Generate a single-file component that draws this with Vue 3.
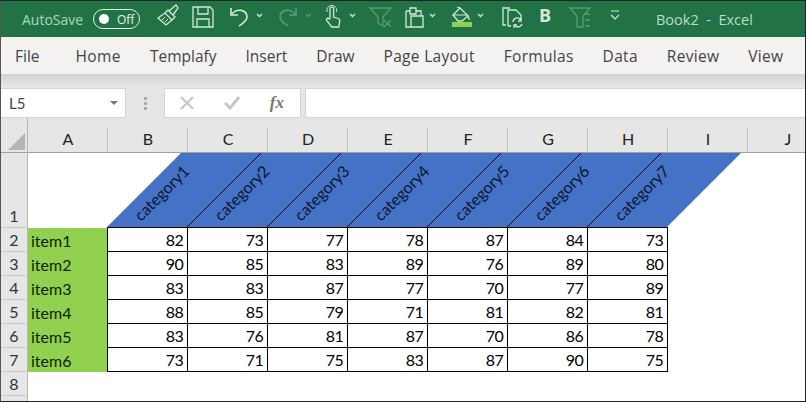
<script setup>
const tabs = ['File','Home','Templafy','Insert','Draw','Page Layout','Formulas','Data','Review','View']
const cols = ['A','B','C','D','E','F','G','H','I','J']
const cats = [1,2,3,4,5,6,7]
const rows = [
  ['item1',82,73,77,78,87,84,73],
  ['item2',90,85,83,89,76,89,80],
  ['item3',83,83,87,77,70,77,89],
  ['item4',88,85,79,71,81,82,81],
  ['item5',83,76,81,87,70,86,78],
  ['item6',73,71,75,83,87,90,75],
]
</script>

<template>
  <div class="app">
    <header class="title">
      <span class="autosave">AutoSave</span>
      <span class="toggle"><i class="knob"></i><b>Off</b></span>
      <svg class="qat" width="490" height="36" viewBox="0 0 490 36" fill="none" stroke="#d3e8db" stroke-width="1.300">
        <!-- brush -->
        <path d="M3 17 L10 12 L17 19 L11 24 Z M10 12 L13 9 L20 16 L17 19 M14 10 L21 4 L23 7 L18 14"/>
        <path d="M7 19 L10 16 M10 21 L13 18" stroke-width="1"/>
        <!-- save -->
        <path d="M38 6 h17 l3 3 v17 h-20 z M43 6 v7 h10 v-7 M42 26 v-8 h12 v8"/>
        <!-- undo -->
        <path d="M76 7 v7 h7 M76 14 c6 -8 16 -5 16 2 c0 4 -5 7 -8 9" stroke-width="1.600"/>
        <path d="M102 13 l2.500 2.500 l2.500 -2.500"/>
        <!-- redo, disabled -->
        <g stroke="#5a9a75">
          <path d="M141 7 v7 h-7 M141 14 c-6 -8 -16 -5 -16 2 c0 4 5 7 8 9" stroke-width="1.600"/>
          <path d="M151 13 l2.500 2.500 l2.500 -2.500"/>
        </g>
        <!-- touch -->
        <path d="M175 17 v-9 a1.800 1.800 0 0 1 3.600 0 v8 l4.500 1.500 c1.500 .5 1.800 1.500 1.600 3 l-1 5.500 h-7 l-5 -6.500 c-1 -2 1 -3 3 -1.500 z"/>
        <path d="M172 11 a5 5 0 1 1 9.500 0" stroke-width="1"/>
        <path d="M195 13 l2.500 2.500 l2.500 -2.500"/>
        <!-- clear filter, disabled -->
        <g stroke="#5a9a75">
          <path d="M215 7 h21 l-8 9 v9 l-5 -3 v-6 z M229 19 l7 7 M236 19 l-7 7"/>
        </g>
        <!-- paste -->
        <path d="M251 10 h4 v-3 h6 v3 h5 v5 M255 10 v3 h6 v-3 M251 10 v16 h5 M256 15 h12 v11 h-12 z"/>
        <path d="M275 13 l2.500 2.500 l2.500 -2.500"/>
        <!-- fill colour -->
        <path d="M298 14 l7 -7 l8 8 l-6 5 h-4 z M305 7 l-3 -1 M313 15 l1.500 4"/>
        <path d="M298 14 h15" stroke-width="1"/>
        <rect x="297" y="21" width="20" height="5" fill="#92d050" stroke="none"/>
        <path d="M323 13 l2.500 2.500 l2.500 -2.500"/>
        <!-- document with refresh -->
        <path d="M351 24 h-3 v-17 h7 M353 25 v-16 h8 l5 5 v4 M353 25 h3"/>
        <path d="M358 21 a4 4 0 0 1 7.500 -2 M366 17 v3 h-3 M367 23 a4 4 0 0 1 -7 1.500 M359 27 v-3 h3"/>
        <!-- bold -->
        <text x="384" y="21" class="bold">B</text>
        <!-- funnel, disabled -->
        <g stroke="#5a9a75">
          <path d="M415 7 h20 l-7 8 v11 h-6 v-11 z M429 13 h6 M430 19 h5 M430 25 h5"/>
        </g>
        <!-- customise -->
        <path d="M456 10 h8 M456 14 l4 4 l4 -4" stroke-width="1.200"/>
      </svg>
      <span class="book">Book2&nbsp; -&nbsp; Excel</span>
    </header>

    <nav class="tabs">
      <span v-for="t in tabs" :key="t" class="tab">{{ t }}</span>
    </nav>

    <section class="fbar">
      <div class="namebox"><span>L5</span><i class="caret"></i></div>
      <div class="dots"><i></i><i></i><i></i></div>
      <div class="buttons">
        <svg width="16" height="14" viewBox="0 0 16 14" fill="none" stroke="#c6c6c6" stroke-width="2"><path d="M2 1 l12 12 M14 1 l-12 12"/></svg>
        <svg width="18" height="14" viewBox="0 0 18 14" fill="none" stroke="#c6c6c6" stroke-width="3"><path d="M2 7 l5 5 l9 -11"/></svg>
        <em>fx</em>
      </div>
      <div class="input"></div>
    </section>

    <main class="sheet">
      <div class="corner"><i></i></div>
      <div v-for="c in cols" :key="c" class="colh">{{ c }}</div>

      <div class="rowh tall">1</div>
      <div class="head">
        <svg width="720" height="75" viewBox="0 0 720 75">
          <path d="M79 74 L153 0 H713 L639 74 Z" fill="#4472c4"/>
          <path v-for="n in 6" :key="n" :d="`M${79 + n * 80} 74 L${153 + n * 80} 0`" stroke="#000" stroke-width="1" fill="none"/>
          <path d="M79 74.500 H640" stroke="#000" stroke-width="1"/>
          <text v-for="n in cats" :key="n" :transform="`translate(${n * 80 + 33} 69) rotate(-45)`" class="cat">category{{ n }}</text>
        </svg>
      </div>

      <template v-for="(r, i) in rows" :key="i">
        <div class="rowh">{{ i + 2 }}</div>
        <div class="item">{{ r[0] }}</div>
        <div v-for="(v, j) in r.slice(1)" :key="j" class="num">{{ v }}</div>
        <div class="blank"></div>
      </template>

      <div class="rowh">8</div>
      <div class="rest"></div>
      <div class="rowh stub"></div>
      <div class="rest"></div>
    </main>
  </div>
</template>

<style scoped>
.app { width: 806px; height: 402px; box-sizing: border-box; border: 1px solid #222; border-left-color: #555; overflow: hidden; background: #fff; display: flex; flex-direction: column; font-family: "Open Sans", sans-serif; }
.title { height: 36px; flex: none; background: #217346; color: #cfe6d8; display: flex; align-items: center; font-size: 14px; }
.autosave { margin-left: 21px; width: 71px; color: #a9d6bb; }
.toggle { width: 47px; height: 20px; box-sizing: border-box; border: 1.500px solid #e6f2ea; border-radius: 10px; display: flex; align-items: center; color: #e6f2ea; font-size: 12px; }
.toggle b { font-weight: 400; margin-left: 8px; }
.knob { width: 10px; height: 10px; border-radius: 50%; background: #fff; margin-left: 5px; }
.qat { margin-left: 15px; flex: none; }
.bold { font: 700 18px "Open Sans", sans-serif; fill: #d3e8db; stroke: none; }
.book { margin-left: 11px; font-size: 14.500px; color: #b9dcc7; white-space: nowrap; }
.tabs { height: 37px; flex: none; background: #f3f2f1; display: flex; align-items: center; padding-left: 14px; color: #444; font-size: 15.500px; box-sizing: border-box; gap: 29px; }
.tab:first-child { margin-right: 7px; }
.tab:nth-child(2) { letter-spacing: .4px; }
.tab:nth-child(n+6) { letter-spacing: .3px; }
.fbar { height: 44px; flex: none; background: linear-gradient(#d2d2d2 0, #e6e6e6 12px, #e6e6e6); display: flex; align-items: flex-end; box-sizing: border-box; }
.namebox { width: 126px; height: 30px; margin-left: -1px; padding-left: 8px; box-sizing: border-box; background: #fff; border: 1px solid #d4d4d4; display: flex; align-items: center; justify-content: space-between; font: 15px Lato, sans-serif; color: #444; }
.caret { width: 0; height: 0; margin-right: 7px; border: 4px solid transparent; border-top-color: #777; border-bottom: 0; }
.dots { width: 38px; height: 30px; display: flex; flex-direction: column; align-items: center; justify-content: center; gap: 2px; }
.dots i { width: 3px; height: 3px; background: #aaa; }
.buttons { width: 137px; height: 30px; box-sizing: border-box; background: #fff; border: 1px solid #d4d4d4; display: flex; align-items: center; justify-content: space-between; padding: 0 16px 0 14px; }
.buttons em { font: italic 700 17px "Liberation Serif", serif; color: #777; }
.input { flex: 1; height: 30px; margin-left: 4px; margin-right: -1px; box-sizing: border-box; background: #fff; border: 1px solid #d4d4d4; }
.sheet { flex: 1; display: grid; grid-template-columns: 27px repeat(10, 80px); grid-template-rows: 35px 75px repeat(7, 24px) 1fr; font-family: Lato, sans-serif; background: #fff; color: #000; min-height: 0; }
.corner { background: #e6e6e6; border-right: 1px solid #b5b5b5; border-bottom: 1px solid #a0a0a0; position: relative; }
.corner i { position: absolute; right: 2px; bottom: 2px; border-style: solid; border-width: 0 0 17px 17px; border-color: transparent transparent #b4b4b4 transparent; }
.colh { background: linear-gradient(#c4c4c4, #c4c4c4) right bottom / 1px 25px no-repeat #e6e6e6; display: flex; align-items: flex-end; justify-content: center; font-size: 16px; line-height: 24px; padding-bottom: 1px; color: #222; border-bottom: 1px solid #a0a0a0; }
.rowh { background: #e6e6e6; display: flex; align-items: center; justify-content: center; font-size: 16px; color: #333; border-right: 1px solid #b5b5b5; border-bottom: 1px solid #c8c8c8; grid-column: 1; }
.tall { align-items: flex-end; line-height: 22px; }
.head { grid-column: 2 / -1; min-width: 0; }
.head svg { display: block; }
.cat { font: 16px Lato, sans-serif; fill: #0a1530; }
.item { background: #92d050; font-size: 16px; display: flex; align-items: center; padding-left: 3px; color: #0c2400; border-right: 1px solid #000; }
.num { display: flex; align-items: center; justify-content: flex-end; padding-right: 4px; font-size: 16px; letter-spacing: -0.700px; border-right: 1px solid #000; border-bottom: 1px solid #000; }
.blank { grid-column: 10 / -1; }
.rest { grid-column: 2 / -1; }
.stub { border-bottom: 0; }
</style>
